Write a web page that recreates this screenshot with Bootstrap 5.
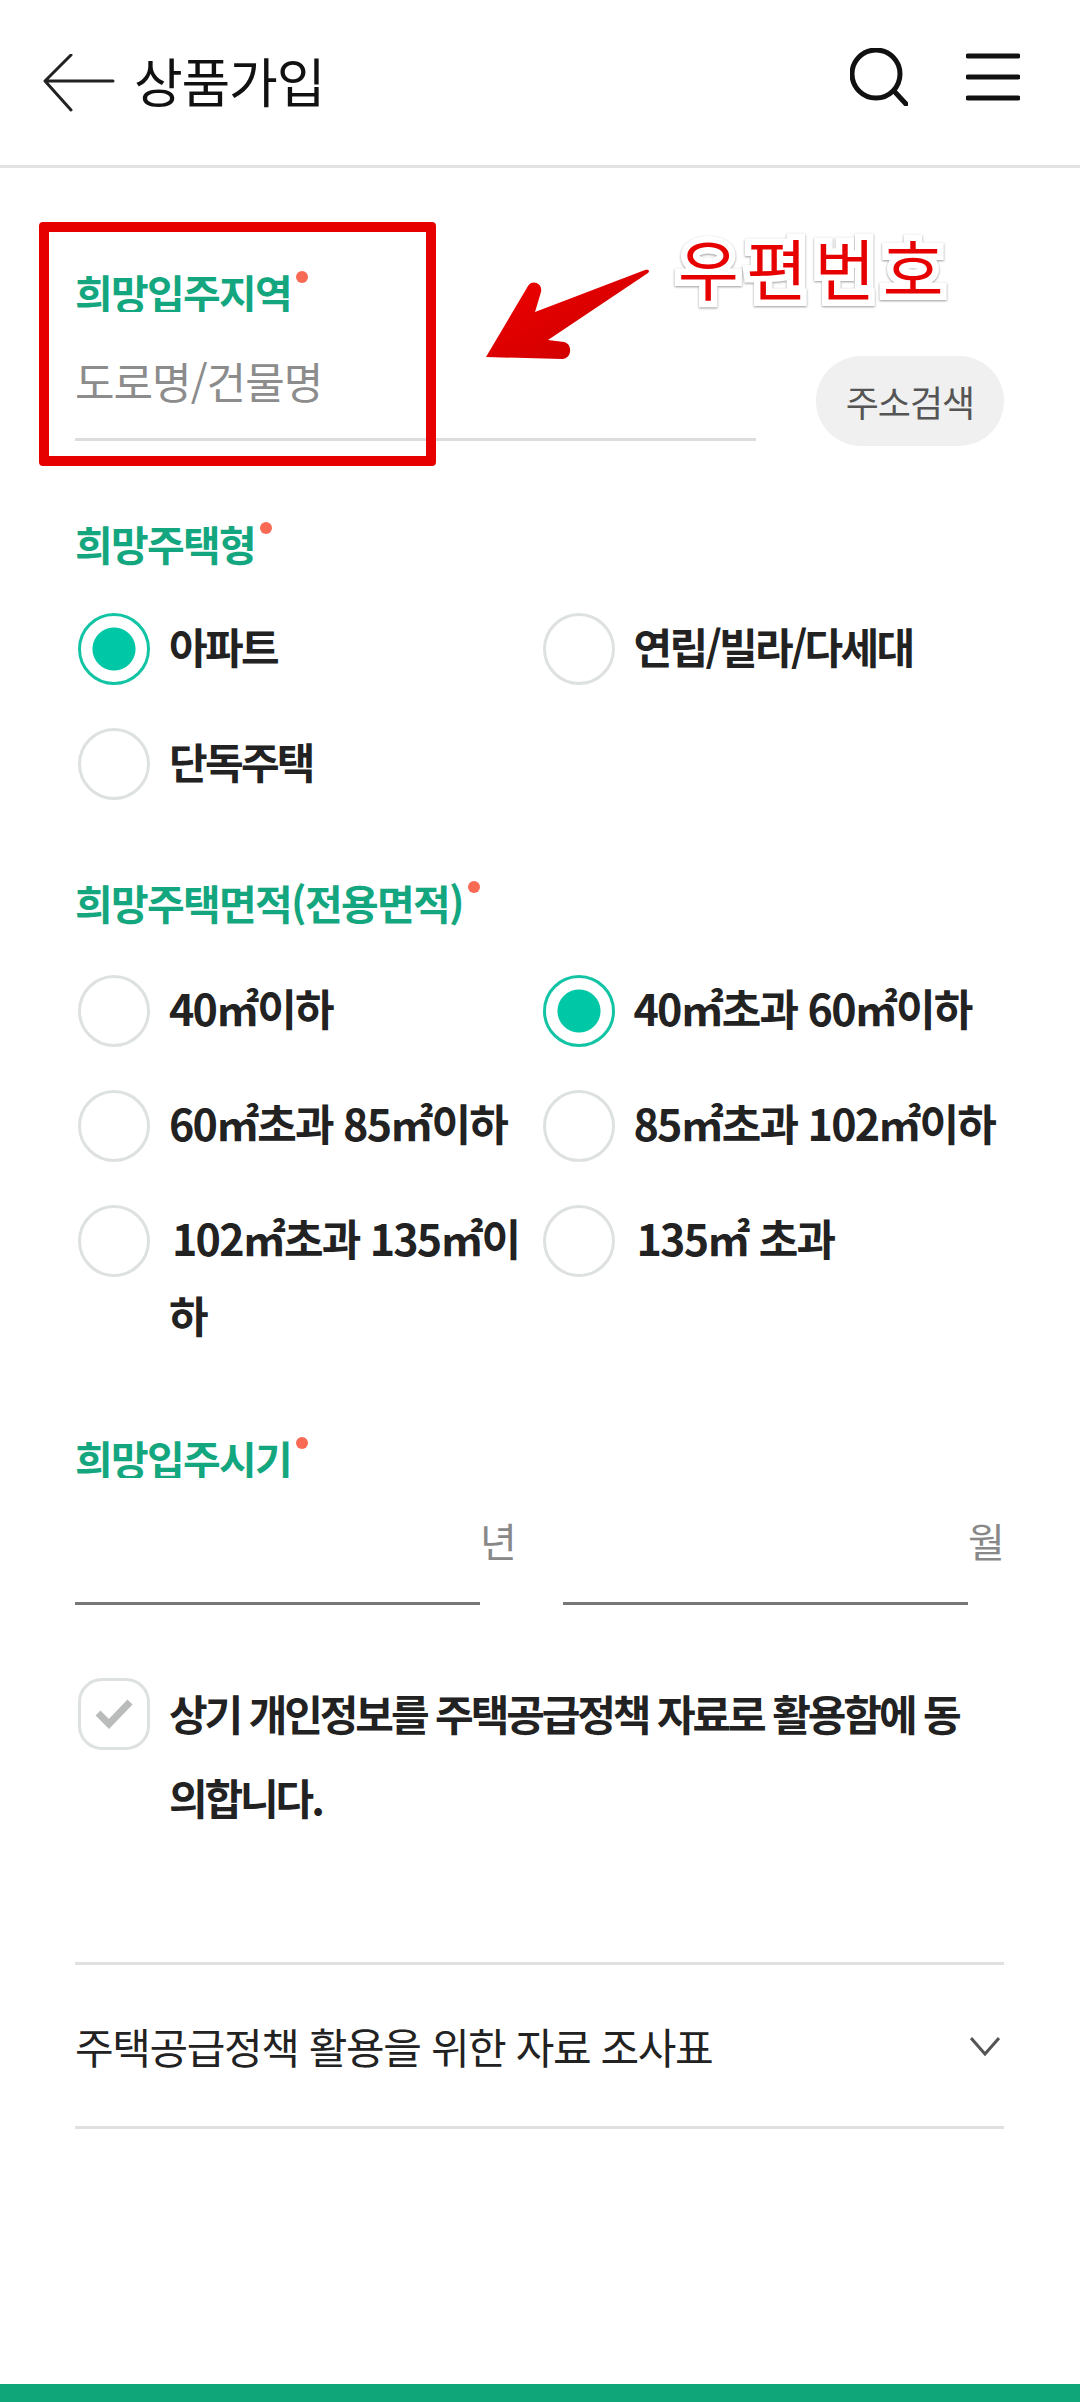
<!DOCTYPE html>
<html lang="ko">
  <head>
    <meta charset="utf-8" />
    <meta name="viewport" content="width=device-width, initial-scale=1" />
    <title>상품가입</title>
    <link href="https://cdn.jsdelivr.net/npm/bootstrap@5.3.0/dist/css/bootstrap.min.css" rel="stylesheet" />
    <style>
      body { font-family: "Noto Sans CJK KR", "Noto Sans", sans-serif; color: #222; background: #fff; }
      .page-wrap { height: 2402px; overflow: hidden; position: relative; }
      .top-bar { height: 168px; border-bottom: 3px solid #e2e2e2; padding: 0 60px 0 43px; }
      .top-title { font-size: 53px; font-weight: 400; letter-spacing: -1.2px; line-height: 60px; color: #111; margin: 0 0 6px 19px; }
      .top-icons { gap: 58px; margin-bottom: 12px; }
      .form-area { padding: 104px 76px 0 75px; }
      .req-label { font-size: 41px; line-height: 40px; font-weight: 700; letter-spacing: -1.7px; color: #14a77f; margin: 0; }
      .req-dot { display: inline-block; width: 12px; height: 12px; border-radius: 50%; background: #f96a55; vertical-align: top; margin: -1px 0 0 5px; }
      .addr-row { margin-bottom: 77px; }
      .addr-input.form-control { width: 681px; height: 129px; border: 0; border-bottom: 3px solid #ddd; border-radius: 0; padding: 10px 0 0; font-size: 43px; line-height: 50px; letter-spacing: -1px; margin-bottom: 5px; box-shadow: none; }
      .addr-input.form-control::placeholder { color: #8c8c8c; opacity: 1; }
      .addr-btn.btn { width: 188px; height: 90px; border-radius: 45px; border: 0; background: #f0f0f0; color: #555; font-size: 36px; letter-spacing: -1px; padding: 0; }
      .opt-group { margin: 50px 0 0; }
      .opt-group-size { margin-top: 53px; }
      .opt-item { display: flex; gap: 19px; margin-bottom: 43px; padding-left: 3px; min-height: 72px; }
      .opt-radio.form-check-input { width: 72px; height: 72px; flex: none; margin: 0; border: 3px solid #dde1df; background-image: none; box-shadow: none; }
      .opt-radio.form-check-input:checked { border-color: #12c4a4; background-color: #fff; background-image: radial-gradient(circle, #00c7a5 0 21px, #fff 22px); }
      .opt-text { font-size: 42px; line-height: 77px; font-weight: 700; letter-spacing: -2.7px; color: #222; margin-top: -6px; }
      .opt-num { font-size: 43px; line-height: 77px; font-weight: 700; letter-spacing: -1.8px; color: #222; margin-top: -6px; }
      .opt-shift { text-indent: 3px; }
      .next-section { margin-top: 39px; }
      .last-section { margin-top: 42px; }
      .date-row { gap: 47px; margin-top: 0; }
      .date-field { width: 441px; }
      .date-field .form-control { width: 405px; height: 127px; border: 0; border-bottom: 3px solid #777; border-radius: 0; box-shadow: none; }
      .date-unit { width: 36px; font-size: 40px; line-height: 40px; color: #888; margin-top: 42px; white-space: nowrap; }
      .agree-row { gap: 19px; margin-top: 71px; padding-left: 3px; }
      .agree-box { width: 72px; height: 72px; flex: none; border: 3px solid #dde1df; border-radius: 24px; margin-top: 2px; }
      .agree-text { font-size: 42px; line-height: 84px; font-weight: 700; letter-spacing: -3.1px; color: #222; margin-top: -5px; padding-right: 24px; }
      .survey-row { height: 167px; border-top: 3px solid #e0e0e0; border-bottom: 3px solid #e0e0e0; margin-top: 123px; font-size: 42px; letter-spacing: -1.4px; color: #222; padding-right: 4px; }
      .bottom-bar { height: 18px; background: #0fa67a; }
      .note-box { position: absolute; left: 39px; top: 222px; width: 397px; height: 244px; border: 10px solid #e60000; border-radius: 4px; }
      .note-arrow { position: absolute; left: 480px; top: 262px; }
      .note-text { position: absolute; left: 678px; top: 221px; font-size: 66px; line-height: 90px; letter-spacing: 7.5px; color: #e60000; -webkit-text-stroke: 13px #fff; paint-order: stroke fill; white-space: nowrap; filter: drop-shadow(0 1px 1px #999); }
    </style>
  </head>
  <body>
    <div class="page-wrap d-flex flex-column">
      <!-- header -->
      <header class="top-bar d-flex align-items-center justify-content-between">
        <div class="d-flex align-items-center">
          <svg width="72" height="58" viewBox="0 0 72 58" fill="none" stroke="#222" stroke-width="3" stroke-linecap="round" stroke-linejoin="round"><path d="M70 27H2M28 1 2 27l26 29"/></svg>
          <h1 class="top-title">상품가입</h1>
        </div>
        <div class="top-icons d-flex align-items-center">
          <svg width="58" height="58" viewBox="0 0 58 58" fill="none" stroke="#111" stroke-width="5" stroke-linecap="round"><circle cx="26" cy="26" r="24"/><path d="M44 43 56 56"/></svg>
          <svg width="54" height="48" viewBox="0 0 54 48" fill="none" stroke="#111" stroke-width="5" stroke-linecap="round"><path d="M2 3h50M2 24h50M2 45h50"/></svg>
        </div>
      </header>

      <main class="form-area flex-grow-1">
        <p class="req-label">희망입주지역<span class="req-dot"></span></p>
        <div class="addr-row d-flex align-items-end justify-content-between">
          <input class="addr-input form-control" type="text" placeholder="도로명/건물명" />
          <button type="button" class="addr-btn btn">주소검색</button>
        </div>

        <p class="req-label">희망주택형<span class="req-dot"></span></p>
        <div class="opt-group row g-0">
          <div class="col-6"><label class="opt-item"><input class="opt-radio form-check-input" type="radio" name="house" checked /><span class="opt-text">아파트</span></label></div>
          <div class="col-6"><label class="opt-item"><input class="opt-radio form-check-input" type="radio" name="house" /><span class="opt-text">연립/빌라/다세대</span></label></div>
          <div class="col-6"><label class="opt-item"><input class="opt-radio form-check-input" type="radio" name="house" /><span class="opt-text">단독주택</span></label></div>
        </div>

        <p class="req-label next-section">희망주택면적(전용면적)<span class="req-dot"></span></p>
        <div class="opt-group opt-group-size row g-0">
          <div class="col-6"><label class="opt-item"><input class="opt-radio form-check-input" type="radio" name="size" /><span class="opt-num">40㎡이하</span></label></div>
          <div class="col-6"><label class="opt-item"><input class="opt-radio form-check-input" type="radio" name="size" checked /><span class="opt-num">40㎡초과 60㎡이하</span></label></div>
          <div class="col-6"><label class="opt-item"><input class="opt-radio form-check-input" type="radio" name="size" /><span class="opt-num">60㎡초과 85㎡이하</span></label></div>
          <div class="col-6"><label class="opt-item"><input class="opt-radio form-check-input" type="radio" name="size" /><span class="opt-num">85㎡초과 102㎡이하</span></label></div>
          <div class="col-6"><label class="opt-item"><input class="opt-radio form-check-input" type="radio" name="size" /><span class="opt-num opt-shift">102㎡초과 135㎡이하</span></label></div>
          <div class="col-6"><label class="opt-item"><input class="opt-radio form-check-input" type="radio" name="size" /><span class="opt-num opt-shift">135㎡ 초과</span></label></div>
        </div>

        <p class="req-label last-section">희망입주시기<span class="req-dot"></span></p>
        <div class="date-row d-flex">
          <div class="date-field d-flex"><input class="form-control" type="text" /><span class="date-unit">년</span></div>
          <div class="date-field d-flex"><input class="form-control" type="text" /><span class="date-unit">월</span></div>
        </div>

        <div class="agree-row d-flex">
          <div class="agree-box d-flex align-items-center justify-content-center">
            <svg width="38" height="30" viewBox="0 0 38 30" fill="none" stroke="#b9bcbb" stroke-width="7"><path d="M3 14l11 11L35 3"/></svg>
          </div>
          <div class="agree-text">상기 개인정보를 주택공급정책 자료로 활용함에 동의합니다.</div>
        </div>

        <div class="survey-row d-flex align-items-center justify-content-between">
          <span>주택공급정책 활용을 위한 자료 조사표</span>
          <svg width="30" height="20" viewBox="0 0 30 20" fill="none" stroke="#555" stroke-width="3"><path d="M1 2l14 16L29 2"/></svg>
        </div>
      </main>

      <div class="bottom-bar"></div>

      <!-- annotation drawn over the screen -->
      <div class="note-box"></div>
      <svg class="note-arrow" width="176" height="104" viewBox="0 0 176 104">
        <defs><linearGradient id="arrowFill" x1="0" y1="0" x2="1" y2="1"><stop offset="0" stop-color="#f20000"/><stop offset="1" stop-color="#c80000"/></linearGradient></defs>
        <path d="M6 95 48 24c4-7 15-3 13 6l-6 20 110-42c4-1 5 1 3 3L68 78l16 2c9 2 8 17-2 17Z" fill="url(#arrowFill)"/>
      </svg>
      <div class="note-text">우편번호</div>
    </div>
    <script src="https://cdn.jsdelivr.net/npm/bootstrap@5.3.0/dist/js/bootstrap.bundle.min.js"></script>
  </body>
</html>
